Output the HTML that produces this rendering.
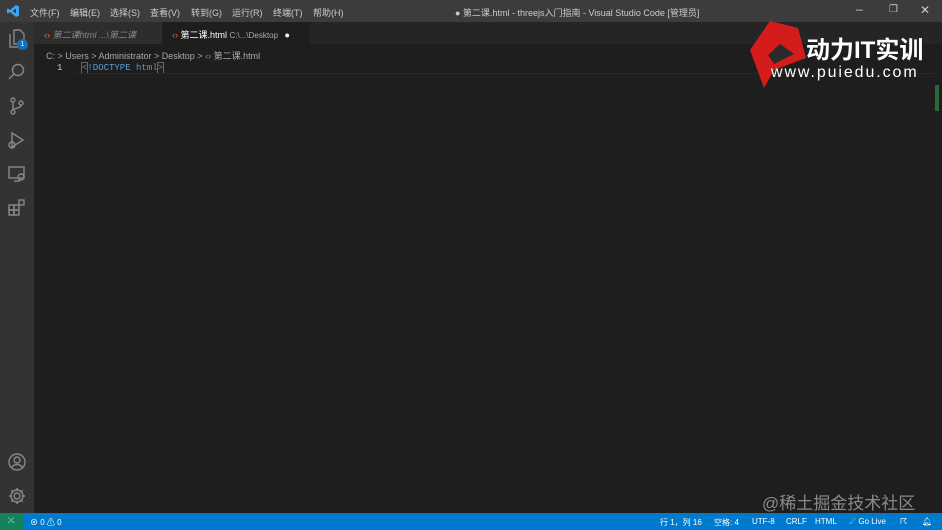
<!DOCTYPE html>
<html><head><meta charset="utf-8"><style>
*{margin:0;padding:0;box-sizing:border-box}
body{width:942px;height:530px;background:#1e1e1e;font-family:"Liberation Sans","Noto Sans CJK SC",sans-serif;position:relative;overflow:hidden;color:#ccc}
.abs{position:absolute}
#title{left:0;top:0;width:942px;height:22px;background:#3c3c3c;font-size:9px;color:#ccc}
#title span{position:absolute;top:6px}
#act{left:0;top:22px;width:34px;height:491px;background:#333}
#tabs{left:34px;top:22px;width:908px;height:22px;background:#252526}
#status{left:0;top:513px;width:942px;height:17px;background:#007acc;color:#fff;font-size:8px}
#status span{position:absolute;top:4px}
</style></head><body>
<div id="title" class="abs">
<svg class="abs" style="left:6px;top:4px" width="14" height="14" viewBox="0 0 14 14"><path d="M10 1 L13 2.5 V11.5 L10 13 L4 8 L2 9.5 L1 9 V5 L2 4.5 L4 6 Z M10 4.5 L6.5 7 L10 9.5Z" fill="#3ea5f0"/></svg>
<span style="left:30px">文件(F)</span><span style="left:70px">编辑(E)</span><span style="left:110px">选择(S)</span><span style="left:150px">查看(V)</span><span style="left:191px">转到(G)</span><span style="left:232px">运行(R)</span><span style="left:273px">终端(T)</span><span style="left:313px">帮助(H)</span>
<span style="left:455px">● 第二课.html - threejs入门指南 - Visual Studio Code [管理员]</span>
<span style="left:856px;top:2px;font-size:12px">–</span><span style="left:889px;top:4px;font-size:10px">❐</span><span style="left:920px;top:3px;font-size:12px">✕</span>
</div>
<div id="act" class="abs">
<svg class="abs" style="left:7px;top:6px" width="20" height="22" viewBox="0 0 20 22" fill="none" stroke="#888" stroke-width="1.4"><path d="M7 2h6l4 4v10H7z M3 6v13h10"/></svg>
<div class="abs" style="left:17px;top:17px;width:11px;height:11px;border-radius:50%;background:#0e70c0;color:#fff;font-size:7px;text-align:center;line-height:11px">1</div>
<svg class="abs" style="left:7px;top:40px" width="20" height="20" viewBox="0 0 20 20" fill="none" stroke="#888" stroke-width="1.4"><circle cx="11" cy="8" r="5.5"/><path d="M7 12l-5 5"/></svg>
<svg class="abs" style="left:7px;top:74px" width="20" height="20" viewBox="0 0 20 20" fill="none" stroke="#888" stroke-width="1.4"><circle cx="6" cy="4" r="2"/><circle cx="6" cy="16" r="2"/><circle cx="14" cy="7" r="2"/><path d="M6 6v8 M14 9c0 4-8 3-8 5"/></svg>
<svg class="abs" style="left:7px;top:108px" width="20" height="20" viewBox="0 0 20 20" fill="none" stroke="#888" stroke-width="1.4"><path d="M5 3l11 7-11 7z"/><circle cx="5" cy="15" r="3"/></svg>
<svg class="abs" style="left:7px;top:142px" width="20" height="20" viewBox="0 0 20 20" fill="none" stroke="#888" stroke-width="1.4"><rect x="2" y="3" width="15" height="11"/><path d="M7 17h6"/><circle cx="14" cy="13" r="3"/></svg>
<svg class="abs" style="left:7px;top:176px" width="20" height="20" viewBox="0 0 20 20" fill="none" stroke="#888" stroke-width="1.4"><rect x="2" y="7" width="5" height="5"/><rect x="7" y="7" width="5" height="5"/><rect x="2" y="12" width="5" height="5"/><rect x="7" y="12" width="5" height="5"/><rect x="12" y="2" width="5" height="5"/></svg>
<svg class="abs" style="left:7px;top:430px" width="20" height="20" viewBox="0 0 20 20" fill="none" stroke="#888" stroke-width="1.4"><circle cx="10" cy="10" r="8"/><circle cx="10" cy="8" r="3"/><path d="M4.5 15.5c3-4 8-4 11 0"/></svg>
<svg class="abs" style="left:7px;top:464px" width="20" height="20" viewBox="0 0 20 20" fill="none" stroke="#888" stroke-width="1.4"><circle cx="10" cy="10" r="3"/><path d="M10 2v3M10 15v3M2 10h3M15 10h3M4.3 4.3l2.1 2.1M13.6 13.6l2.1 2.1M4.3 15.7l2.1-2.1M13.6 6.4l2.1-2.1"/><circle cx="10" cy="10" r="6"/></svg>
</div>
<div id="tabs" class="abs">
<div class="abs" style="left:0;top:0;width:128px;height:22px;background:#2d2d2d;font-size:9px;color:#888;padding:6px 0 0 10px;font-style:italic"><span style="color:#e37933;font-style:normal">‹›</span> 第二课html ...\第二课</div>
<div class="abs" style="left:128px;top:0;width:148px;height:22px;background:#1e1e1e;font-size:9px;color:#fff;padding:6px 0 0 10px"><span style="color:#e37933">‹›</span> 第二课.html <span style="color:#aaa;font-size:8px">C:\...\Desktop</span> <span style="margin-left:4px">●</span></div>
</div>
<div class="abs" style="left:46px;top:49px;font-size:9px;color:#a9a9a9">C: &gt; Users &gt; Administrator &gt; Desktop &gt; <span style="color:#e37933">‹›</span> 第二课.html</div>
<div class="abs" style="left:57px;top:63px;font-family:'Liberation Mono',monospace;font-size:9px;color:#ccc">1</div>
<div class="abs" style="left:82px;top:63px;font-family:'Liberation Mono',monospace;font-size:9px;color:#569cd6"><span style="color:#808080;outline:1px solid #666">&lt;</span>!DOCTYPE html<span style="color:#808080;outline:1px solid #666">&gt;</span></div>
<div class="abs" style="left:75px;top:73px;width:860px;height:1px;background:#282828"></div>
<svg class="abs" style="left:748px;top:18px" width="62" height="72" viewBox="0 0 62 72"><path d="M22 3 L50 10 L58 40 L26 52 L16 70 L2 32 Z" fill="#d41c1c"/><path d="M20 37 L32 26 L46 36 L26 46Z" fill="#2a2a2a"/></svg>
<div class="abs" style="left:806px;top:30px;font-size:24px;font-weight:bold;color:#fff">动力IT实训</div>
<div class="abs" style="left:771px;top:64px;font-size:16px;color:#fff;letter-spacing:1.9px">www.puiedu.com</div>
<div class="abs" style="left:935px;top:85px;width:4px;height:26px;background:#2a6a3a"></div>
<div class="abs" style="left:762px;top:489px;font-size:17px;color:#8a8a8a">@稀土掘金技术社区</div>
<div id="status" class="abs">
<div class="abs" style="left:0;top:0;width:24px;height:17px;background:#16825d"></div>
<span style="left:8px;top:3px">⤫</span>
<span style="left:30px">⊗ 0 ⚠ 0</span>
<span style="left:660px">行 1，列 16</span><span style="left:714px">空格: 4</span><span style="left:752px">UTF-8</span><span style="left:786px">CRLF</span><span style="left:815px">HTML</span><span style="left:849px">☄ Go Live</span><span style="left:900px">☈</span><span style="left:922px">🔔︎</span>
</div>
</body></html>
